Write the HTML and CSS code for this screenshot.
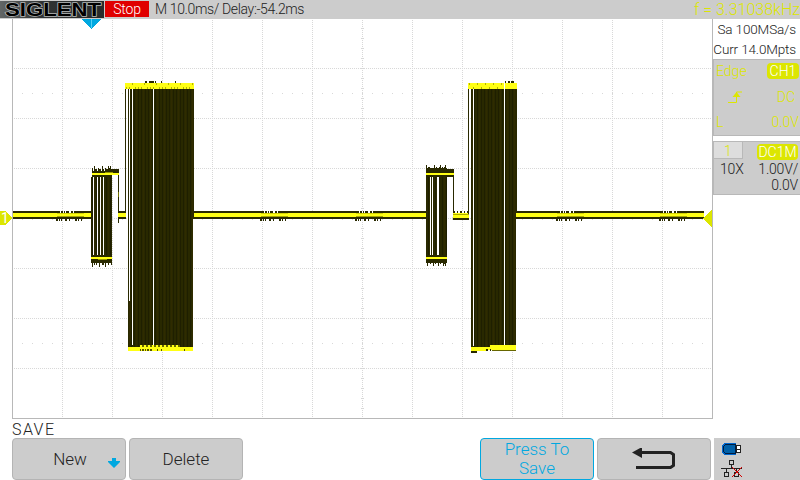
FILE: index.html
```
<!DOCTYPE html>
<html lang="en">
<head>
<meta charset="utf-8">
<title>Oscilloscope</title>
<link rel="stylesheet" href="styles.css">
</head>
<body>
<div class="screen">
  <header class="topbar">
    <div class="logo"><svg width="104" height="17"><text x="5" y="14.500" textLength="96" lengthAdjust="spacingAndGlyphs">SIGLENT</text></svg></div>
    <div class="stop">Stop</div>
    <div class="timebase">M 10.0ms/ Delay:-54.2ms</div>
    <div class="freq">f = 3.31038kHz</div>
  </header>
  <main class="middle">
    <svg class="plot" width="713" height="400" viewBox="0 19 713 400">
      <defs>
        <pattern id="stripes" width="7" height="400" patternUnits="userSpaceOnUse"><path fill="#292900" d="M0 0h7v400H0z"/><path fill="#1f1f00" d="M1 0h1v400H1zM5 0h1v400H5z"/><path fill="#302b00" d="M3 0h1v400H3z"/></pattern>
      </defs>
      <g id="grid"></g>
      <path d="M12.5 19v399.5h700V19" fill="none" stroke="#b8b8b8"/>
      <g id="trace"></g>
      <path d="M82 19h19l-9.500 10z" fill="#00a8e0"/><path d="M91 19h1v9h-1z" fill="#55d0f5"/>
      <path d="M0 211h5l7 7-7 7H0z" fill="#dce600"/><text class="marker" x="1" y="223">1</text>
      <path d="M712 210v17l-9-8.500z" fill="#dce600"/>
    </svg>
    <aside class="side">
      <div class="acq"><span class="sa">Sa 100MSa/s</span><span class="curr">Curr 14.0Mpts</span></div>
      <section class="trigger">
        <div class="row"><span>Edge</span><b class="chip ch">CH1</b></div>
        <div class="row mid"><svg class="edge" width="14" height="13"><path d="M0 11.500h8.500V1H14" fill="none" stroke="#dce600"/><path d="M8.500 1l4 5h-8z" fill="#dce600"/></svg><span>DC</span></div>
        <div class="row"><span>L</span><span>0.0V</span></div>
      </section>
      <section class="channel">
        <div class="tabrow"><span class="tab">1</span><b class="chip dc">DC1M</b></div>
        <div class="vals"><span>10X</span><span>1.00V/</span></div>
        <div class="vals last"><span>0.0V</span></div>
      </section>
    </aside>
  </main>
  <div class="title">SAVE</div>
  <footer class="menu">
    <div class="button new"><span>New</span><svg width="12" height="10"><path d="M4 0h4v3h4v1L6 10 0 4V3h4z" fill="#00a8e0"/></svg></div>
    <div class="button">Delete</div>
    <div class="button save">Press To<br>Save</div>
    <div class="button"><svg width="44" height="22"><path d="M9 4.500h29.500l3 2v11l-3 2H4" fill="none" stroke="#222" stroke-width="3"/><path d="M0 4.500L10-1v11z" fill="#222"/></svg></div>
    <div class="status">
      <svg width="86" height="42" shape-rendering="crispEdges">
        <path d="M10 5h12v12H10l-2-2V7z" fill="#0068d0"/><path d="M11.500 6.500h10v9h-10l-2-2v-5z" fill="#0060a8" stroke="#001c40"/>
        <path d="M22.500 7.500h4v7h-4zM22.500 11h4" fill="#fff" stroke="#222"/>
        <g fill="none" stroke="#222"><path d="M15.500 22.500h4v4h-4zM17.500 27v3M7 30.500h21M12.500 31v4M22.500 31v4M10.500 34.500h4v4h-4zM20.500 34.500h4v4h-4z"/></g>
        <path d="M18 29l10 10M28 29l-10 10" stroke="#d40000"/>
      </svg>
    </div>
  </footer>
</div>
<script src="scope.js"></script>
</body>
</html>
```
FILE: styles.css
```
* { box-sizing: border-box; }
body { margin: 0; background: #fff; color: #222; font-family: Roboto, "Liberation Sans", sans-serif; font-weight: 300; }
svg { display: block; }
.screen { width: 800px; height: 480px; overflow: hidden; display: flex; flex-direction: column; }
.topbar { height: 19px; flex: none; background: #ccc; display: flex; padding-top: 1px; font-size: 14px; line-height: 17px; white-space: nowrap; }
.logo { width: 104px; height: 17px; margin-right: 1px; background: linear-gradient(90deg, #626666, #303333 40%, #292c2c); }
.logo svg { overflow: visible; }
.logo text { font: bold 18px "Liberation Sans", sans-serif; fill: #000; stroke: #b5b8b8; stroke-width: 1.4px; paint-order: stroke; }
.stop { width: 44px; height: 16px; background: #e00000; color: #fff; text-align: center; line-height: 16px; font-weight: 300; margin-right: 6px; letter-spacing: -.2px; }
.timebase { letter-spacing: -.36px; }
.freq { margin-left: auto; color: #dce600; font-size: 16px; }
.middle { display: flex; height: 400px; flex: none; }
.plot { shape-rendering: crispEdges; flex: none; }
.marker { fill: #fff; font: 14px Roboto, sans-serif; }
.side { width: 87px; font-size: 14px; }
.acq { height: 40px; display: flex; flex-direction: column; align-items: flex-end; padding-right: 4px; line-height: 20px; white-space: nowrap; font-size: 13.500px; letter-spacing: -.15px; }
.trigger { height: 77px; background: #ccc; border: solid #b8b8b8; border-width: 1px 0 1px 1px; color: #dce600; padding: 3px 1px 0 2px; }
.row { display: flex; justify-content: space-between; height: 17px; line-height: 17px; }
.row.mid { height: 34px; align-items: center; }
.edge { margin-left: 12px; }
.row.mid span { margin-right: 4px; }
.chip { background: #dce600; color: #fff; font-weight: 300; border-radius: 4px; height: 16px; line-height: 16px; text-align: center; }
.ch { width: 32px; }
.channel { margin-top: 5px; height: 54px; background: #ccc; border: solid #b8b8b8; border-width: 1px 0 1px 1px; }
.tabrow { display: flex; justify-content: space-between; height: 19px; padding-right: 2px; }
.tab { width: 29px; height: 17px; background: #ddd; border: solid #b8b8b8; border-width: 0 1px 1px 0; color: #dce600; text-align: center; line-height: 18px; }
.dc { width: 41px; margin-top: 2px; }
.vals { display: flex; justify-content: space-between; height: 16px; line-height: 17px; padding: 0 2px 0 6px; letter-spacing: -.2px; }
.vals.last { justify-content: flex-end; }
.title { height: 19px; padding: 1px 0 0 12px; font-size: 16px; line-height: 19px; letter-spacing: 1.4px; }
.menu { height: 42px; display: flex; padding-left: 12px; }
.button { width: 114px; height: 42px; margin-right: 3px; border: 1px solid #b4b4b4; border-radius: 4px; background: #ccc; display: flex; align-items: center; justify-content: center; text-align: center; font-size: 17px; line-height: 19px; flex: none; }
.new { padding-left: 25px; justify-content: space-between; }
.new span { width: 64px; }
.new svg { margin: 8px 5px 0 0; }
.save { margin-left: 234px; border-color: #00a8e0; color: #00a8e0; }
.status { width: 86px; background: #ccc; }
```
FILE: scope.js
```
const YELLOW = '#ffff14', DARK = '#292900', DOT = '#d8d8d8';
function rects(id, list) {
  document.getElementById(id).innerHTML = list.map(([x, y, w, h, fill]) =>
    `<rect x="${x}" y="${y}" width="${w}" height="${h}" fill="${fill}"/>`).join('');
}

// Graticule: dotted divisions, a centre axis and two rows of minor marks.
const grid = [];
for (let x = 62; x < 712; x += 50) for (let y = 20; y < 418; y += 2) grid.push([x, y, 1, 1, DOT]);
for (let y = 68; y < 418; y += 50) for (let x = 14; x < 712; x += 2) grid.push([x, y, 1, 1, DOT]);
for (let x = 22; x < 712; x += 10) {
  grid.push([x, 93, 1, 1, DOT], [x, 343, 1, 1, DOT], [x, 217, 1, 3, DOT]);
}
for (let y = 28; y < 418; y += 10) grid.push([361, y, 3, 1, DOT]);
rects('grid', grid);

const t = [];
const dark = (x, y, w, h) => t.push([x, y, w, h, DARK]);
const yel = (x, y, w, h) => t.push([x, y, w, h, YELLOW]);
const stripe = (x, y, w, h) => t.push([x, y, w, h, 'url(#stripes)']);

// Idle baseline.
[[13, 78], [194, 233], [516, 188]].forEach(([x, w]) => { dark(x, 211, w, 8); yel(x, 213, w, 4); });
[60, 264, 359, 560, 663].forEach(s => {
  [0, 3, 5, 9, 10, 13, 19, 22, 25].forEach((d, i) => {
    dark(s + d - 4, 219, i % 3 ? 1 : 2, 2);
    if (i < 6) t.push([s + d, 211, 1, 2, '#fff']);
  });
  t.push([s - 3, 213, 27, 1, '#d4d400'], [s - 3, 216, 27, 1, '#a5a500']);
});

// First short burst.
dark(92, 169, 27, 8);
[93, 97, 101, 104].forEach(x => t.push([x, 169, 1, 2, '#fff']));
[92, 94, 98, 102, 105, 108, 109, 110].forEach((x, i) => dark(x, i % 2 ? 166 : 168, 1, 4));
stripe(91, 177, 21, 80);
[93, 97, 100, 103].forEach(x => t.push([x, 177, 1, 78, '#fff']));
dark(91, 255, 21, 8);
[92, 94, 96, 99, 102, 103, 105, 108, 111].forEach((x, i) => dark(x, 263, 1, i % 3 ? 2 : 4));
t.push([112, 175, 6, 2, '#fff']);
yel(92, 173, 27, 2); yel(91, 257, 21, 2);
t.push([105, 172, 8, 1, '#999900'], [98, 259, 9, 1, '#999900']);
dark(118, 175, 1, 48); t.push([118, 192, 1, 5, '#777700']);
dark(118, 211, 8, 8); yel(118, 213, 8, 4);

// First tall burst.
dark(125, 89, 1, 124);
stripe(128, 89, 66, 258);
t.push([129, 89, 1, 212, '#fff'], [132, 89, 1, 256, '#fff'], [153, 89, 1, 257, '#fff'], [193, 219, 1, 132, '#fff']);
yel(125, 83, 69, 6); yel(128, 347, 65, 4); yel(140, 345, 40, 2);
[145, 146, 149, 150, 151, 152, 153, 155, 161, 175].forEach(x => dark(x, 81, 1, 2));
for (let x = 126; x < 193; x += 3) t.push([x, x % 4 ? 87 : 83, 1, 2, '#b3b300']);
[140, 142, 143, 145, 147, 148, 150, 151, 157, 161, 184].forEach(x => t.push([x, 349, 1, 2, '#555500']));
for (let x = 142; x < 180; x += 4) t.push([x, 345, 2, 2, '#666600']);

// Second short burst.
dark(426, 171, 28, 6); dark(426, 168, 21, 4); dark(447, 169, 7, 3);
[426, 428, 429, 434, 436, 439, 440, 442, 444, 445].forEach((x, i) => dark(x, i % 3 ? 167 : 165, 1, 4));
stripe(426, 177, 21, 80);
t.push([430, 177, 1, 78, '#fff'], [432, 177, 1, 78, '#fff'], [437, 177, 2, 78, '#fff']);
dark(426, 255, 21, 8);
[427, 430, 433, 435, 438, 440, 443, 444, 445].forEach((x, i) => dark(x, 263, 1, i % 2 ? 1 : 3));
yel(426, 173, 28, 2); yel(426, 257, 21, 2);
dark(453, 177, 1, 36);
dark(453, 211, 16, 9); yel(453, 213, 16, 5);
[455, 458, 462, 465].forEach(x => t.push([x, 211, 2, 2, '#fff']));
t.push([453, 214, 16, 1, '#aaaa00']);

// Second tall burst.
dark(468, 87, 1, 127);
stripe(471, 89, 45, 258); dark(516, 89, 1, 124);
t.push([473, 89, 1, 257, '#fff'], [504, 83, 1, 263, '#fff']);
yel(468, 83, 36, 6); yel(505, 83, 12, 6);
yel(471, 347, 45, 3); yel(490, 345, 26, 2); yel(471, 349, 15, 2);
dark(471, 351, 6, 2); dark(486, 349, 2, 2); dark(490, 349, 1, 2);
t.push([492, 350, 24, 1, '#666600']);
[505, 508, 509, 511, 512, 513].forEach(x => dark(x, 81, 1, 2));
for (let x = 469; x < 503; x += 4) t.push([x, x % 8 === 5 ? 83 : 87, 1, 2, '#b3b300']);
rects('trace', t);
```
